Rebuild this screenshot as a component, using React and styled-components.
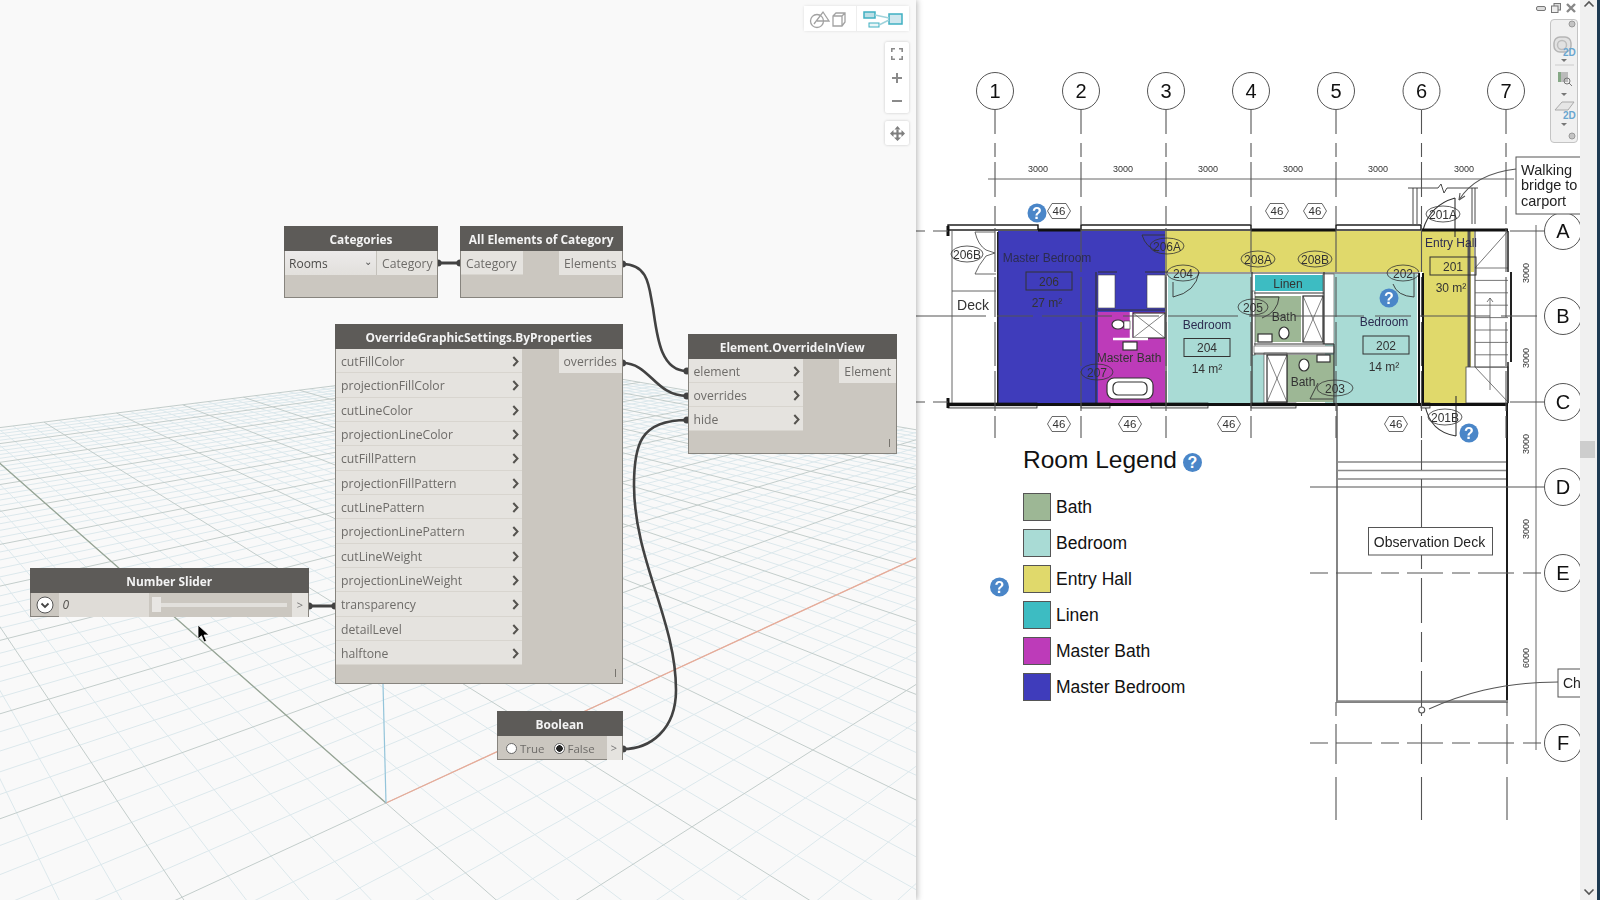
import styled, { createGlobalStyle } from "styled-components"

const GlobalStyle = createGlobalStyle`
  html, body { margin: 0; padding: 0; height: 100%; background: #fff; }
  #root { height: 100%; }
`

// ---- ground grid ----
const project = (a, b) => {
  const w = 1 + a + b
  return [(386 + a * 1644 - b * 270) / w, (803 + a * 222 + b * 226) / w]
}
const A_MAJOR = 0.1395
const B_MAJOR = 0.18
const clampNear = (other, from) => Math.max(from, -1 - other + 0.06)

const gridLines = (major) => {
  const out = []
  for (let i = -50; i <= 50; i++) {
    const isMajor = i % 5 === 0
    if (isMajor !== major) continue
    const a = (i / 5) * A_MAJOR
    const b = (i / 5) * B_MAJOR
    const p1 = project(a, clampNear(a, -10 * B_MAJOR))
    const p2 = project(a, 10 * B_MAJOR)
    const p3 = project(clampNear(b, -10 * A_MAJOR), b)
    const p4 = project(10 * A_MAJOR, b)
    out.push(`M${p1[0].toFixed(1)} ${p1[1].toFixed(1)}L${p2[0].toFixed(1)} ${p2[1].toFixed(1)}`)
    out.push(`M${p3[0].toFixed(1)} ${p3[1].toFixed(1)}L${p4[0].toFixed(1)} ${p4[1].toFixed(1)}`)
  }
  return out.join("")
}

const inputsOGS = [
  "cutFillColor", "projectionFillColor", "cutLineColor", "projectionLineColor",
  "cutFillPattern", "projectionFillPattern", "cutLinePattern", "projectionLinePattern",
  "cutLineWeight", "projectionLineWeight", "transparency", "detailLevel", "halftone",
]

// ---- plan data ----
const gridX = [["1", 995], ["2", 1081], ["3", 1166], ["4", 1251], ["5", 1336], ["6", 1421.5], ["7", 1506]]
const gridY = [["A", 231], ["B", 316], ["C", 402], ["D", 487], ["E", 573], ["F", 743]]
const legendItems = [
  ["Bath", "#9db795"], ["Bedroom", "#a9dbd5"], ["Entry Hall", "#e0d96b"],
  ["Linen", "#3dbcc2"], ["Master Bath", "#bd3bb9"], ["Master Bedroom", "#3f3cbb"],
]
const rooms = [
  [998, 231, 167, 172, "#3f3cbb"],
  [1098, 312, 67, 91, "#bd3bb9"],
  [1165, 231, 309, 41, "#e0d96b"],
  [1423, 231, 48, 172, "#e0d96b"],
  [1168, 274, 84, 129, "#a9dbd5"],
  [1325, 274, 92, 129, "#a9dbd5"],
  [1252, 355, 12, 48, "#a9dbd5"],
  [1255, 275, 68, 16, "#3dbcc2"],
  [1255, 296, 46, 46, "#9db795"],
  [1287, 355, 47, 47, "#9db795"],
]
const whites = [
  [1098, 275, 17, 33], [1147, 275, 18, 33],
  [1252, 291, 3, 64], [1254, 346, 80, 7], [1323, 274, 11, 70],
  [1264, 353, 23, 50],
]
const doorTags = [
  ["206B", 967, 254, 16], ["206A", 1167, 246, 17], ["204", 1183, 273, 16], ["205", 1253, 307, 15],
  ["207", 1097, 372, 16], ["208A", 1258, 259, 17], ["208B", 1315, 259, 17], ["202", 1403, 273, 16],
  ["203", 1335, 388, 18], ["201A", 1443, 214, 17], ["201B", 1445, 417, 17],
]
const hexTags = [[1059, 211], [1277, 211], [1315, 211], [1059, 424], [1130, 424], [1229, 424], [1396, 424]]
const helpMarks = [[1037, 213], [1389, 298], [1469, 433], [999.5, 587]]
const roomTags = [
  ["Master Bedroom", 1047, 262, 1026, 272, "206", "27 m²", 307],
  ["Bedroom", 1207, 329, 1184, 338.5, "204", "14 m²", 373],
  ["Bedroom", 1384, 326, 1363, 336, "202", "14 m²", 371],
  ["Entry Hall", 1451, 247, 1430, 257, "201", "30 m²", 292],
]
const openWalls = [[948, 1038, 226], [1081, 1251, 226], [1336, 1421, 226], [948, 1037, 404], [1081, 1110, 404], [1151, 1208, 404], [1251, 1296, 404], [1421, 1430, 404]]
const solidWalls = [[1038, 1081, 228.5], [1251, 1336, 228.5], [1421, 1508, 228.5], [948, 1508, 403]]
const dimsTop = [1038, 1123, 1208, 1293, 1378, 1464]
const dimsRight = [[273, "3000"], [358, "3000"], [444, "3000"], [529, "3000"], [658, "6000"]]
const treads = Array.from({ length: 9 }, (_, i) => 268 + i * 12.4)
const gridXDashes = "24 9 14 5 35 9 18 4 44 5 40 5 44 5 40 5 22 30 12 6"

// ---- small drawings ----
const Chevron = () => (
  <svg width="7" height="11" viewBox="0 0 7 11">
    <path d="M1.3 1 L5.5 5.5 L1.3 10" fill="none" stroke="#55534f" strokeWidth="2" />
  </svg>
)

const Help = ({ x, y }) => (
  <g>
    <circle cx={x} cy={y} r="9.5" fill="#4a86c8" />
    <HelpText x={x} y={y + 5.5}>?</HelpText>
  </g>
)

const Hex = ({ x, y }) => (
  <g>
    <path d={`M${x - 11.5} ${y}l4.5 -7.5h14l4.5 7.5l-4.5 7.5h-14z`} fill="#fff" stroke="#444" strokeWidth="0.8" />
    <PlanText x={x} y={y + 4} $size={11.5} $anchor="middle">46</PlanText>
  </g>
)

const Bubble = ({ label, x, y }) => (
  <g>
    <circle cx={x} cy={y} r="18.5" fill="#fff" stroke="#555" strokeWidth="1" />
    <PlanText x={x} y={y + 7} $size={20} $anchor="middle" $color="#111">{label}</PlanText>
  </g>
)

const RevitPlan = () => (
  <PlanSvg viewBox="916 0 664 900">
    {rooms.map(([x, y, w, h, fill], i) => <rect key={i} x={x} y={y} width={w} height={h} fill={fill} />)}
    {whites.map(([x, y, w, h], i) => <rect key={i} x={x} y={y} width={w} height={h} fill="#fff" stroke="#444" strokeWidth="0.6" />)}

    {/* interior walls */}
    <g fill="none" stroke="#333" strokeWidth="1.2">
      <path d="M1096 272V403M1098 272H1117M1145 272H1168M1096 310H1165M1166 272V403M1168 273H1252M1252 272V403M1252 273H1325M1254 293H1324M1254 344H1334M1254 354H1334M1324 272V344M1334 344V403M1325 273H1418" />
      <rect x="1133" y="313" width="32" height="25" fill="#fff" />
      <path d="M1133 313L1165 338M1165 313L1133 338" strokeWidth="0.6" />
      <rect x="1303" y="296" width="20" height="46" fill="#fff" />
      <path d="M1303 296L1323 342M1323 296L1303 342" strokeWidth="0.6" />
      <rect x="1267" y="355" width="20" height="47" fill="#fff" />
      <path d="M1267 355L1287 402M1287 355L1267 402" strokeWidth="0.6" />
      <path d="M1131 312V339M1113 339H1148" strokeWidth="2.5" stroke="#fff" />
      <rect x="1123" y="342" width="14" height="8" fill="#fff" />
      <rect x="1258" y="334" width="14" height="8" fill="#fff" />
      <rect x="1317" y="355" width="13" height="7" fill="#fff" />
      <ellipse cx="1118" cy="324.5" rx="6" ry="4.5" fill="#fff" />
      <rect x="1124" y="321" width="6" height="8" fill="#fff" strokeWidth="0.6" />
      <ellipse cx="1284" cy="333" rx="5" ry="6" fill="#fff" />
      <ellipse cx="1304" cy="365" rx="5" ry="6" fill="#fff" />
      <rect x="1107" y="378" width="46" height="21" rx="7" fill="#fff" />
      <rect x="1113" y="382" width="34" height="13" rx="5" fill="#fff" />
    </g>
    <path d="M1419 273V403M1423 273V403" stroke="#111" strokeWidth="2" />
    <path d="M1469 231V367" stroke="#555" strokeWidth="3" />
    <path d="M1475 231V367" stroke="#333" strokeWidth="1" />
    <rect x="1466" y="367" width="42" height="36" fill="#fff" stroke="#444" strokeWidth="0.8" />

    {/* stairs */}
    <g stroke="#555" strokeWidth="0.8" fill="none">
      {treads.map((y) => <path key={y} d={`M1475 ${y}H1508`} />)}
      <path d="M1475 268L1508 231M1475 367L1508 402M1490 298V390M1487 302L1490 298L1493 302" />
    </g>
    <path d="M1511 272V362" stroke="#222" strokeWidth="2" />
    <path d="M1508 231V272M1508 362V403" stroke="#222" strokeWidth="1.5" />

    {/* porch */}
    <g stroke="#333" strokeWidth="0.9" fill="none">
      <path d="M1408 188H1438L1441 184L1444 193L1447 188H1478M1413 188V224M1417 188V224M1472 188V224M1475 188V224" />
      <path d="M1455 198V237M1455 198Q1430 205 1423 230M1456 396V436M1456 436Q1430 432 1425 405" strokeWidth="1.1" />
      <path d="M1173 282V297Q1196 292 1199 272M1414 273V297Q1397 296 1393 284M1279 297H1255M1279 297Q1278 312 1262 318M1333 399H1310L1318 383" />
      <path d="M1142 235H1165M1142 235Q1146 248 1158 251" />
    </g>

    {/* deck */}
    <g stroke="#555" strokeWidth="0.9" fill="none">
      <path d="M952 231V403M995 232H975Q978 245 986 250L995 253L986 256Q978 266 975 274H996M952 291H996" />
    </g>
    <rect x="997" y="232" width="1.5" height="171" fill="#222" />

    {/* outer walls */}
    {openWalls.map(([x1, x2, y], i) => (
      <rect key={i} x={x1} y={y - 1} width={x2 - x1} height={5} fill={y === 404 ? "#ddd" : "#fff"} stroke="#111" strokeWidth={y === 404 ? 0.7 : 1.4} />
    ))}
    {solidWalls.map(([x1, x2, y], i) => (
      <rect key={i} x={x1} y={y} width={x2 - x1} height={3} fill="#111" />
    ))}
    <path d="M948 226V236M948 398V408" stroke="#111" strokeWidth="3" />

    {/* observation deck */}
    <g fill="none" stroke="#444" strokeWidth="1.3">
      <path d="M1337 404V702H1507V404" />
      <path d="M1337 462H1506M1337 470.5H1506M1337 479H1506" stroke="#888" />
      <path d="M1337 701.5H1507" stroke="#888" strokeWidth="2.5" />
    </g>
    <path d="M1507 403V700" stroke="#111" strokeWidth="1.8" />

    {/* grid lines */}
    <g stroke="#555" strokeWidth="1.1" fill="none">
      {gridX.map(([label, x]) => (
        <path key={label} d={`M${x} 110V440`} strokeDasharray={gridXDashes} />
      ))}
      <path d="M1421.5 440V702" strokeDasharray="30 9 90 9 45 9" />
      {[1336, 1421.5, 1507].map((x) => (
        <path key={x} d={`M${x} 702V826`} strokeDasharray="14 8 40 13 43" />
      ))}
      <path d="M916 231H925M933 231H948M1510 231H1544M916 316H1544M916 402H925M933 402H948M1510 402H1544" strokeDasharray="70 11 36 9" />
      <path d="M1310 487H1544" />
      <path d="M1310 573H1544M1310 743H1544" strokeDasharray="18 8 36 9" />
      <path d="M988 179H1514M1536 225V750" strokeWidth="0.9" />
      <path d="M1558 682C1500 682 1460 695 1429 709" />
      <circle cx="1421.7" cy="710" r="3" fill="#fff" />
      <path d="M1516 169C1490 172 1470 182 1459 200" />
      <path d="M1459 200L1460 193M1459 200L1465 196" />
    </g>

    {dimsTop.map((x, i) => <PlanText key={i} x={x} y={172} $size={9} $anchor="middle">3000</PlanText>)}
    {dimsRight.map(([y, t], i) => <PlanText key={i} x={0} y={0} transform={`translate(1529 ${y}) rotate(-90)`} $size={9} $anchor="middle">{t}</PlanText>)}

    {gridX.map(([label, x]) => <Bubble key={label} label={label} x={x} y={91} />)}
    {gridY.map(([label, y]) => <Bubble key={label} label={label} x={1563} y={y} />)}

    {/* tags */}
    {roomTags.map(([name, cx, y, bx, by, num, area, ay], i) => (
      <g key={i}>
        <PlanText x={cx} y={y} $size={12} $anchor="middle" $color="#2c2c50">{name}</PlanText>
        <rect x={bx} y={by} width="46" height="18" fill="none" stroke="#333" strokeWidth="1" />
        <PlanText x={bx + 23} y={by + 13.5} $size={12} $anchor="middle">{num}</PlanText>
        <PlanText x={cx} y={ay} $size={12} $anchor="middle">{area}</PlanText>
      </g>
    ))}
    <PlanText x={1288} y={288} $size={12} $anchor="middle">Linen</PlanText>
    <PlanText x={1284} y={321} $size={12} $anchor="middle">Bath</PlanText>
    <PlanText x={1303} y={386} $size={12} $anchor="middle">Bath</PlanText>
    <PlanText x={1129} y={362} $size={12} $anchor="middle">Master Bath</PlanText>
    <PlanText x={973} y={310} $size={14} $anchor="middle">Deck</PlanText>

    {doorTags.map(([t, x, y, rx], i) => (
      <g key={i}>
        <ellipse cx={x} cy={y} rx={rx} ry="8" fill="none" stroke="#333" strokeWidth="0.8" />
        <PlanText x={x} y={y + 4.5} $size={12} $anchor="middle">{t}</PlanText>
      </g>
    ))}
    {hexTags.map(([x, y], i) => <Hex key={i} x={x} y={y} />)}
    {helpMarks.map(([x, y], i) => <Help key={i} x={x} y={y} />)}

    {/* text notes */}
    <rect x="1516" y="157" width="70" height="57" fill="#fff" stroke="#555" strokeWidth="1" />
    <PlanText x={1521} y={175} $size={14.5} $color="#222">Walking</PlanText>
    <PlanText x={1521} y={190} $size={14.5} $color="#222">bridge to</PlanText>
    <PlanText x={1521} y={206} $size={14.5} $color="#222">carport</PlanText>
    <rect x="1368.5" y="527.5" width="124" height="27.5" fill="#fff" stroke="#555" strokeWidth="1" />
    <PlanText x={1429.5} y={546.5} $size={14} $anchor="middle" $color="#222">Observation Deck</PlanText>
    <rect x="1558" y="669" width="30" height="28" fill="#fff" stroke="#555" strokeWidth="1" />
    <PlanText x={1563} y={688} $size={14} $color="#222">Ch</PlanText>
  </PlanSvg>
)

const NavWheel = () => (
  <NavPanel>
    <svg width="26" height="122" viewBox="0 0 26 122">
      <circle cx="21" cy="4" r="3" fill="#c4c4c4" stroke="#999" />
      <rect x="3" y="17" width="17" height="15" rx="6" fill="#e2e2e2" stroke="#b5b5b5" strokeWidth="1.5" />
      <circle cx="11" cy="25" r="4.5" fill="none" stroke="#bdbdbd" strokeWidth="1.5" />
      <NavLabel x="12" y="36">2D</NavLabel>
      <path d="M10 39h6l-3 3z" fill="#777" />
      <path d="M4 45H23" stroke="#ccc" />
      <rect x="7" y="52" width="10" height="10" fill="#bbb" />
      <rect x="7" y="52" width="3" height="10" fill="#86a886" />
      <circle cx="16" cy="61" r="3" fill="none" stroke="#777" />
      <path d="M18 63l3 3" stroke="#777" />
      <path d="M10 73h6l-3 3z" fill="#777" />
      <path d="M4 90L11 82H23L17 90Z" fill="#e6e6e6" stroke="#aaa" />
      <NavLabel x="12" y="99">2D</NavLabel>
      <path d="M10 103h6l-3 3z" fill="#777" />
      <circle cx="21" cy="116" r="3" fill="#c4c4c4" stroke="#999" />
    </svg>
  </NavPanel>
)

const WindowButtons = () => (
  <WindowBar>
    <svg width="10" height="5" viewBox="0 0 10 5"><rect x="0.5" y="0.5" width="9" height="4" rx="1.5" fill="#ddd" stroke="#777" /></svg>
    <svg width="10" height="10" viewBox="0 0 10 10"><rect x="3" y="0.5" width="6.5" height="6.5" fill="#ddd" stroke="#777" /><rect x="0.5" y="3" width="6.5" height="6.5" fill="#eee" stroke="#777" /></svg>
    <svg width="10" height="10" viewBox="0 0 10 10"><path d="M1 1L9 9M9 1L1 9" stroke="#888" strokeWidth="2.4" /></svg>
  </WindowBar>
)

export default function App() {
  return (
    <>
      <GlobalStyle />
      <Screen>
        <DynamoPane>
          <GridSvg viewBox="0 0 916 900">
            <path d={gridLines(false)} stroke="#dce8ec" strokeWidth="1" fill="none" />
            <path d={gridLines(true)} stroke="#c3cdcb" strokeWidth="1" fill="none" />
            <path d={`M386 803L${project(0, 1.8).join(" ")}`} stroke="#97a596" strokeWidth="1.3" fill="none" />
            <path d={`M386 803L${project(1.395, 0).join(" ")}`} stroke="#e9ab98" strokeWidth="1.3" fill="none" />
            <path d="M386 803L383 684" stroke="#93c4da" strokeWidth="1.2" fill="none" />
          </GridSvg>

          <ViewBar>
            <ViewButton>
              <svg width="42" height="22" viewBox="0 0 42 22" fill="none" stroke="#a2a2a2" strokeWidth="1.3">
                <circle cx="8" cy="13" r="6.5" />
                <path d="M5 16L14 4L20 13H8" />
                <path d="M24 8L27 5H36V14L33 18H24ZM24 8H33V18M33 8L36 5" />
              </svg>
            </ViewButton>
            <ViewButton>
              <svg width="40" height="22" viewBox="0 0 40 22">
                <rect x="1" y="4" width="11" height="6" fill="#bcdfe6" stroke="#3fb0c2" strokeWidth="1.5" />
                <rect x="6" y="15" width="10" height="4" fill="#eaf5f7" stroke="#3fb0c2" />
                <rect x="26" y="6" width="13" height="10" fill="#cfe7ee" stroke="#3fb0c2" strokeWidth="1.5" />
                <path d="M12 7L26 10M16 17L26 12" stroke="#9fd3dc" strokeWidth="1.5" />
              </svg>
            </ViewButton>
          </ViewBar>
          <ZoomStack>
            <ZoomButton>
              <svg width="12" height="12" viewBox="0 0 12 12" fill="none" stroke="#8a8a8a" strokeWidth="1.6">
                <path d="M0.8 4V0.8H4M8 0.8H11.2V4M11.2 8V11.2H8M4 11.2H0.8V8" />
              </svg>
            </ZoomButton>
            <ZoomButton>
              <svg width="12" height="12" viewBox="0 0 12 12"><path d="M6 1V11M1 6H11" stroke="#8a8a8a" strokeWidth="2" /></svg>
            </ZoomButton>
            <ZoomButton>
              <svg width="12" height="12" viewBox="0 0 12 12"><path d="M1 6H11" stroke="#8a8a8a" strokeWidth="2" /></svg>
            </ZoomButton>
          </ZoomStack>
          <PanButton>
            <svg width="15" height="15" viewBox="0 0 15 15" fill="#7e7e7e">
              <path d="M6.4 3.5H8.6V6.4H11.5V4L15 7.5L11.5 11V8.6H8.6V11.5H11L7.5 15L4 11.5H6.4V8.6H3.5V11L0 7.5L3.5 4V6.4H6.4V3.5Z" />
              <path d="M4.5 3.5L7.5 0L10.5 3.5Z" />
            </svg>
          </PanButton>

          <WireSvg viewBox="0 0 916 900">
            <g fill="none" stroke="#424242" strokeWidth="2.6">
              <path d="M438 263H460" strokeWidth="3" />
              <path d="M622.5 264C650 264 649 290 653 308C657 335 660 371 687 371" />
              <path d="M622.5 363C650 363 655 396 687 396" />
              <path d="M687 420C640 420 634 445 634 485C634 560 676 620 676 690C676 730 650 749 623 749" />
              <path d="M309 606H335" strokeWidth="3" />
            </g>
            <g fill="#424242">
              {[[438, 263], [460, 263], [622.5, 264], [687, 371], [622.5, 363], [687, 396], [687, 420], [623, 749], [309, 606], [335, 606]].map(([x, y], i) => (
                <circle key={i} cx={x} cy={y} r="3.6" />
              ))}
            </g>
          </WireSvg>

          <Node $x={284} $y={226} $w={154} $h={72}>
            <NodeHeader>Categories</NodeHeader>
            <NodeBody>
              <Dropdown>Rooms<DropArrow>⌄</DropArrow></Dropdown>
              <OutputPort $w={60}>Category</OutputPort>
            </NodeBody>
          </Node>

          <Node $x={460} $y={226} $w={162.5} $h={72}>
            <NodeHeader>All Elements of Category</NodeHeader>
            <NodeBody>
              <InputColumn><PortRow $w={62}>Category</PortRow></InputColumn>
              <OutputPort $w={63}>Elements</OutputPort>
            </NodeBody>
          </Node>

          <Node $x={335} $y={324} $w={287.5} $h={360}>
            <NodeHeader>OverrideGraphicSettings.ByProperties</NodeHeader>
            <NodeBody>
              <InputColumn>
                {inputsOGS.map((name) => <PortRow key={name} $w={186}>{name}<Chevron /></PortRow>)}
              </InputColumn>
              <OutputPort $w={63}>overrides</OutputPort>
            </NodeBody>
            <Grip />
          </Node>

          <Node $x={687.5} $y={333.5} $w={209.5} $h={120}>
            <NodeHeader>Element.OverrideInView</NodeHeader>
            <NodeBody>
              <InputColumn>
                {["element", "overrides", "hide"].map((name) => <PortRow key={name} $w={114}>{name}<Chevron /></PortRow>)}
              </InputColumn>
              <OutputPort $w={57}>Element</OutputPort>
            </NodeBody>
            <Grip />
          </Node>

          <Node $x={29.5} $y={568} $w={279.5} $h={49}>
            <NodeHeader>Number Slider</NodeHeader>
            <SliderRow>
              <ToggleCell>
                <svg width="18" height="18" viewBox="0 0 18 18">
                  <circle cx="9" cy="9" r="8" fill="#fff" stroke="#555" strokeWidth="1" />
                  <path d="M5.5 7.5L9 11L12.5 7.5" fill="none" stroke="#444" strokeWidth="1.8" />
                </svg>
              </ToggleCell>
              <ValueCell>0</ValueCell>
              <SliderCell>
                <SliderThumb />
                <SliderTrack />
              </SliderCell>
              <ArrowCell $w={16}>&gt;</ArrowCell>
            </SliderRow>
          </Node>

          <Node $x={497} $y={711} $w={125.5} $h={49}>
            <NodeHeader>Boolean</NodeHeader>
            <SliderRow>
              <RadioGroup>
                <RadioLabel><Radio /> True</RadioLabel>
                <RadioLabel><Radio $on /> False</RadioLabel>
              </RadioGroup>
              <ArrowCell $w={15}>&gt;</ArrowCell>
            </SliderRow>
          </Node>

          <CursorMark width="14" height="20" viewBox="0 0 14 20">
            <path d="M1 1V15L4.5 11.8L7 18L9.5 17L7 11H12Z" fill="#000" stroke="#fff" strokeWidth="0.8" />
          </CursorMark>
        </DynamoPane>

        <RevitPane>
          <RevitPlan />
          <Legend>
            <LegendTitle>Room Legend<LegendHelp>?</LegendHelp></LegendTitle>
            {legendItems.map(([name, color]) => (
              <LegendRow key={name}>
                <Swatch $color={color} />
                {name}
              </LegendRow>
            ))}
          </Legend>
          <WindowButtons />
          <NavWheel />
        </RevitPane>

        <Scrollbar>
          <ScrollArrow>
            <svg width="12" height="8" viewBox="0 0 12 8"><path d="M1.5 6.5L6 2L10.5 6.5" fill="none" stroke="#555" strokeWidth="1.6" /></svg>
          </ScrollArrow>
          <ScrollThumb />
          <ScrollArrow $bottom>
            <svg width="12" height="8" viewBox="0 0 12 8"><path d="M1.5 1.5L6 6L10.5 1.5" fill="none" stroke="#555" strokeWidth="1.6" /></svg>
          </ScrollArrow>
        </Scrollbar>
        <WindowEdge />
      </Screen>
    </>
  )
}

const Screen = styled.div`
  display: flex;
  width: 1600px;
  height: 900px;
  overflow: hidden;
  background: #fff;
`

const DynamoPane = styled.div`
  position: relative;
  width: 916px;
  height: 100%;
  flex: none;
  background: #f9f9f9;
  box-shadow: 1px 0 6px rgba(0, 0, 0, 0.3);
  z-index: 1;
  overflow: hidden;
  font-family: "Open Sans", "Liberation Sans", sans-serif;
`

const GridSvg = styled.svg`
  position: absolute;
  inset: 0;
  width: 916px;
  height: 900px;
  filter: blur(0.3px);
`

const WireSvg = styled(GridSvg)`
  pointer-events: none;
  z-index: 1;
`

const ViewBar = styled.div`
  position: absolute;
  top: 6px;
  right: 7px;
  display: flex;
  gap: 1px;
  height: 25px;
  border-radius: 2px;
  box-shadow: 0 0 3px rgba(0, 0, 0, 0.12);
  background: #eee;
`

const ViewButton = styled.div`
  display: flex;
  align-items: center;
  justify-content: center;
  width: 52px;
  background: #fff;
`

const ZoomStack = styled.div`
  position: absolute;
  top: 42px;
  right: 7px;
  width: 24px;
  height: 71px;
  display: flex;
  flex-direction: column;
  background: #fff;
  border-radius: 2px;
  box-shadow: 0 0 3px rgba(0, 0, 0, 0.2);
`

const ZoomButton = styled.div`
  flex: 1;
  display: flex;
  align-items: center;
  justify-content: center;
`

const PanButton = styled.div`
  position: absolute;
  top: 121px;
  right: 7px;
  width: 24px;
  height: 24px;
  display: flex;
  align-items: center;
  justify-content: center;
  background: #fff;
  border-radius: 2px;
  box-shadow: 0 0 3px rgba(0, 0, 0, 0.2);
`

const Node = styled.div`
  position: absolute;
  left: ${(p) => p.$x}px;
  top: ${(p) => p.$y}px;
  width: ${(p) => p.$w}px;
  height: ${(p) => p.$h}px;
  z-index: 2;
  display: flex;
  flex-direction: column;
  box-sizing: border-box;
  background: #cbc7c0;
  border: 1px solid #87847e;
  border-top: none;
  filter: blur(0.25px);
`

const NodeHeader = styled.div`
  height: 25px;
  flex: none;
  background: #5d5b58;
  color: #f3f3f3;
  font-size: 11.9px;
  font-weight: 700;
  line-height: 27px;
  text-align: center;
  white-space: nowrap;
  margin: 0 -1px;
`

const NodeBody = styled.div`
  display: flex;
  justify-content: space-between;
  align-items: flex-start;
  flex: 1;
`

const InputColumn = styled.div`
  display: flex;
  flex-direction: column;
`

const PortRow = styled.div`
  display: flex;
  align-items: center;
  justify-content: space-between;
  box-sizing: border-box;
  width: ${(p) => p.$w}px;
  height: 24.33px;
  padding: 2px 3px 0 5px;
  background: #e5e3df;
  border-bottom: 1.5px solid #d8d5cf;
  color: #6e6c69;
  font-size: 12.2px;
  white-space: nowrap;
`

const OutputPort = styled.div`
  box-sizing: border-box;
  width: ${(p) => p.$w}px;
  height: 24px;
  padding: 1px 5px 0;
  background: #e5e3df;
  color: #6e6c69;
  font-size: 12.2px;
  line-height: 24px;
  text-align: right;
  white-space: nowrap;
`

const Dropdown = styled.div`
  display: flex;
  align-items: center;
  justify-content: space-between;
  box-sizing: border-box;
  width: 92px;
  height: 24px;
  padding: 0 4px;
  background: linear-gradient(#eceaea, #e2e0dc);
  border-right: 1px solid #c4c1bb;
  color: #4c4b49;
  font-size: 12px;
`

const DropArrow = styled.span`
  font-size: 10px;
  line-height: 10px;
  margin-top: -4px;
  color: #555;
`

const Grip = styled.div`
  position: absolute;
  right: 6px;
  bottom: 6px;
  width: 1px;
  height: 8px;
  background: #77746e;
`

const SliderRow = styled.div`
  display: flex;
  flex: 1;
  align-items: stretch;
`

const ToggleCell = styled.div`
  width: 28px;
  display: flex;
  align-items: center;
  justify-content: center;
`

const ValueCell = styled.div`
  width: 90px;
  padding-left: 4px;
  box-sizing: border-box;
  background: #dfdcd7;
  color: #55534f;
  font-size: 12px;
  font-style: italic;
  line-height: 23px;
`

const SliderCell = styled.div`
  position: relative;
  flex: 1;
  display: flex;
  align-items: center;
  background: #cbc7c0;
`

const SliderTrack = styled.div`
  flex: 1;
  height: 4px;
  margin: 0 5px 0 12px;
  background: #e2e0dc;
`

const SliderThumb = styled.div`
  position: absolute;
  left: 3px;
  top: 4px;
  width: 9px;
  height: 15px;
  background: #e8e6e3;
`

const ArrowCell = styled.div`
  width: ${(p) => p.$w}px;
  background: #e5e3df;
  color: #777;
  font-size: 11px;
  line-height: 24px;
  text-align: center;
`

const RadioGroup = styled.div`
  flex: 1;
  display: flex;
  align-items: center;
  gap: 9px;
  padding-left: 8px;
`

const RadioLabel = styled.span`
  display: flex;
  align-items: center;
  gap: 3px;
  color: #6e6c69;
  font-size: 11.5px;
`

const Radio = styled.span`
  box-sizing: border-box;
  width: 11px;
  height: 11px;
  border-radius: 50%;
  border: 1px solid #666;
  background: ${(p) => (p.$on ? "radial-gradient(circle, #222 0 3px, #fff 3.5px)" : "#fff")};
`

const CursorMark = styled.svg`
  position: absolute;
  left: 197px;
  top: 624px;
  z-index: 4;
`

const RevitPane = styled.div`
  position: relative;
  flex: 1;
  height: 100%;
  overflow: hidden;
  background: #fff;
  font-family: "Liberation Sans", Arial, sans-serif;
`

const PlanSvg = styled.svg`
  display: block;
  width: 664px;
  height: 900px;
  filter: blur(0.35px);
`

const PlanText = styled.text`
  font-family: "Liberation Sans", Arial, sans-serif;
  font-size: ${(p) => p.$size}px;
  fill: ${(p) => p.$color || "#333"};
  text-anchor: ${(p) => p.$anchor || "start"};
`

const HelpText = styled.text`
  font-family: "Liberation Sans", Arial, sans-serif;
  font-size: 16px;
  font-weight: 700;
  fill: #fff;
  text-anchor: middle;
`

const Legend = styled.div`
  position: absolute;
  left: 107px;
  top: 446px;
  display: flex;
  flex-direction: column;
  gap: 8px;
  color: #111;
`

const LegendTitle = styled.div`
  display: flex;
  align-items: center;
  gap: 6px;
  height: 28px;
  margin-bottom: 11px;
  font-size: 24.5px;
  white-space: nowrap;
`

const LegendHelp = styled.span`
  width: 19px;
  height: 19px;
  margin-top: 4px;
  border-radius: 50%;
  background: #4a86c8;
  color: #fff;
  font-size: 16px;
  font-weight: 700;
  line-height: 19px;
  text-align: center;
`

const LegendRow = styled.div`
  display: flex;
  align-items: center;
  gap: 5px;
  height: 28px;
  font-size: 17.5px;
  white-space: nowrap;
`

const Swatch = styled.span`
  box-sizing: border-box;
  width: 28px;
  height: 28px;
  background: ${(p) => p.$color};
  border: 1px solid #555;
`

const WindowBar = styled.div`
  position: absolute;
  top: 3px;
  right: 4px;
  display: flex;
  align-items: center;
  gap: 5px;
`

const NavPanel = styled.div`
  position: absolute;
  top: 19px;
  right: 2px;
  width: 26px;
  height: 122px;
  box-sizing: content-box;
  background: #f0f0f0;
  border: 1px solid #c4c4c4;
  border-radius: 4px;
`

const NavLabel = styled.text`
  font-family: "Liberation Sans", Arial, sans-serif;
  font-size: 10px;
  font-weight: 700;
  fill: #6aa6cf;
`

const Scrollbar = styled.div`
  width: 17px;
  flex: none;
  display: flex;
  flex-direction: column;
  background: #f0f0f0;
`

const ScrollArrow = styled.div`
  display: flex;
  justify-content: center;
  height: 9px;
  margin-top: ${(p) => (p.$bottom ? "auto" : "0")};
  margin-bottom: ${(p) => (p.$bottom ? "3px" : "0")};
`

const ScrollThumb = styled.div`
  width: 15px;
  height: 17px;
  margin-top: 432px;
  background: #cdcdcd;
`

const WindowEdge = styled.div`
  width: 3px;
  flex: none;
  background: #1d3a52;
`
